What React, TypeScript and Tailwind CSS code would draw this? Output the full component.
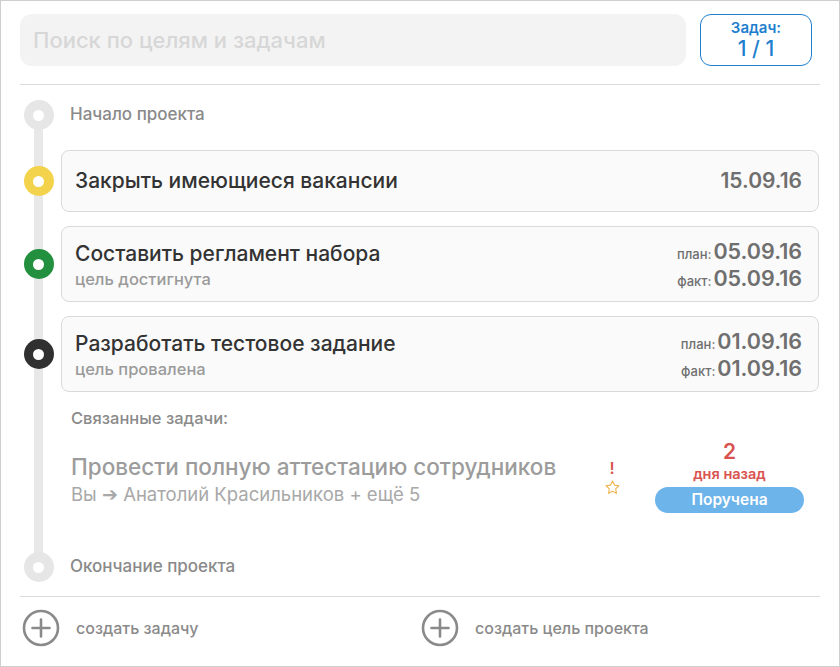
import React from "react";

const font = { fontFamily: "Inter, 'Noto Sans', sans-serif" };

function Dot({ color }: { color: string }) {
  return (
    <div className="w-[35px] flex justify-center shrink-0">
      <div className={`w-[30px] h-[30px] rounded-full ${color} flex items-center justify-center relative z-10`}>
        <div className="w-[11px] h-[11px] rounded-full bg-white" />
      </div>
    </div>
  );
}

function PlusIcon() {
  return (
    <svg width="38" height="38" viewBox="0 0 38 38" fill="none">
      <circle cx="19" cy="19" r="17" stroke="#8a8a8a" strokeWidth="2.6" />
      <path d="M19 10.5v17M10.5 19h17" stroke="#8a8a8a" strokeWidth="2.6" strokeLinecap="round" />
    </svg>
  );
}

function DatePair({ plan, fact }: { plan: string; fact: string }) {
  return (
    <div className="flex flex-col items-end leading-[24px] mt-[3px]">
      <div className="flex items-baseline">
        <span className="text-[13px] text-[#6f6f6f] font-medium">план:</span>
        <span className="ml-[2px] text-[21.5px] text-[#6f6f6f] font-semibold">{plan}</span>
      </div>
      <div className="flex items-baseline">
        <span className="text-[13px] text-[#6f6f6f] font-medium">факт:</span>
        <span className="ml-[2px] text-[21.5px] text-[#6f6f6f] font-semibold">{fact}</span>
      </div>
    </div>
  );
}

export default function App() {
  return (
    <div style={font} className="w-[840px] h-[667px] bg-white border border-[#cfcfcf] flex flex-col overflow-hidden">
      <div className="flex gap-[14px] px-[19px] pt-[13px]">
        <div className="flex-1 h-[52px] rounded-[12px] bg-[#f3f3f3] flex items-center px-[13px]">
          <span className="text-[22px] font-medium text-[#d7d7d7]">Поиск по целям и задачам</span>
        </div>
        <div className="w-[112px] h-[52px] rounded-[11px] border-[1.5px] border-[#1f7fce] flex flex-col items-center justify-center mr-[8px]">
          <span className="text-[15px] font-semibold text-[#1f7fce] leading-[17px]">Задач:</span>
          <span className="text-[21px] font-medium text-[#1f7fce] leading-[26px]">1 / 1</span>
        </div>
      </div>
      <div className="mx-[19px] mt-[18px] h-px bg-[#dcdcdc]" />

      <div className="relative px-[20px] pt-[15px] flex flex-col">
        <div className="absolute left-[33px] top-[30px] w-[9px] h-[452px] bg-[#e8e8e8]" />

        <div className="flex items-center h-[30px]">
          <Dot color="bg-[#e6e6e6]" />
          <span className="ml-[14px] text-[17px] font-medium text-[#8a8a8a]">Начало проекта</span>
        </div>

        <div className="flex items-center mt-[20px]">
          <Dot color="bg-[#f2d34b]" />
          <div className="ml-[5px] flex-1 h-[62px] rounded-[8px] border border-[#dadada] bg-[#fafafa] flex items-center justify-between pl-[13px] pr-[16px]">
            <span className="text-[21px] font-medium text-[#333]">Закрыть имеющиеся вакансии</span>
            <span className="text-[21px] font-semibold text-[#6f6f6f]">15.09.16</span>
          </div>
        </div>

        <div className="flex items-center mt-[14px]">
          <Dot color="bg-[#22903f]" />
          <div className="ml-[5px] flex-1 h-[76px] rounded-[8px] border border-[#dadada] bg-[#fafafa] flex items-center justify-between pl-[13px] pr-[16px]">
            <div className="flex flex-col mt-[2px]">
              <span className="text-[21px] font-medium text-[#333] leading-[28px]">Составить регламент набора</span>
              <span className="text-[16.5px] font-medium text-[#9a9a9a] leading-[22px]">цель достигнута</span>
            </div>
            <DatePair plan="05.09.16" fact="05.09.16" />
          </div>
        </div>

        <div className="flex items-center mt-[14px]">
          <Dot color="bg-[#303030]" />
          <div className="ml-[5px] flex-1 h-[76px] rounded-[8px] border border-[#dadada] bg-[#fafafa] flex items-center justify-between pl-[13px] pr-[16px]">
            <div className="flex flex-col mt-[2px]">
              <span className="text-[21px] font-medium text-[#333] leading-[28px]">Разработать тестовое задание</span>
              <span className="text-[16.5px] font-medium text-[#9a9a9a] leading-[22px]">цель провалена</span>
            </div>
            <DatePair plan="01.09.16" fact="01.09.16" />
          </div>
        </div>

        <div className="ml-[50px] mt-[16px] h-[20px] flex items-center">
          <span className="text-[16.5px] font-medium text-[#8a8a8a]">Связанные задачи:</span>
        </div>

        <div className="ml-[50px] mt-[12px] flex items-center h-[80px]">
          <div className="flex flex-col flex-1">
            <span className="text-[22.5px] font-medium text-[#9c9c9c] leading-[28px]">Провести полную аттестацию сотрудников</span>
            <span className="text-[18.5px] text-[#a8a8a8] leading-[26px]">Вы ➔ Анатолий Красильников + ещё 5</span>
          </div>
          <div className="flex flex-col items-center w-[20px] mr-[33px] -mt-[6px]">
            <span className="text-[16px] font-semibold text-[#d9534f] leading-[18px]">!</span>
            <svg width="17" height="17" viewBox="0 0 24 24" fill="none" className="mt-[2px]">
              <path d="M12 2.8l2.8 5.8 6.3.9-4.6 4.4 1.1 6.3L12 17.2l-5.6 3 1.1-6.3-4.6-4.4 6.3-.9z" stroke="#f0b450" strokeWidth="1.6" strokeLinejoin="round" />
            </svg>
          </div>
          <div className="flex flex-col items-center w-[149px] mr-[15px] -mt-[8px]">
            <span className="text-[21px] font-semibold text-[#d9534f] leading-[24px]">2</span>
            <span className="text-[14.5px] font-semibold text-[#d9534f] leading-[20px]">дня назад</span>
            <div className="mt-[3px] w-full h-[26px] rounded-full bg-[#6cb4ea] flex items-center justify-center">
              <span className="text-[15.5px] font-semibold text-white">Поручена</span>
            </div>
          </div>
        </div>

        <div className="flex items-center h-[30px] mt-[32px]">
          <Dot color="bg-[#e6e6e6]" />
          <span className="ml-[14px] text-[17px] font-medium text-[#8a8a8a]">Окончание проекта</span>
        </div>
      </div>

      <div className="mx-[19px] mt-[14px] h-px bg-[#dcdcdc]" />

      <div className="flex items-center px-[21px] mt-[12px]">
        <div className="flex items-center w-[399px]">
          <PlusIcon />
          <span className="ml-[16px] text-[16px] font-medium text-[#8a8a8a]">создать задачу</span>
        </div>
        <div className="flex items-center">
          <PlusIcon />
          <span className="ml-[16px] text-[16px] font-medium text-[#8a8a8a]">создать цель проекта</span>
        </div>
      </div>
    </div>
  );
}
